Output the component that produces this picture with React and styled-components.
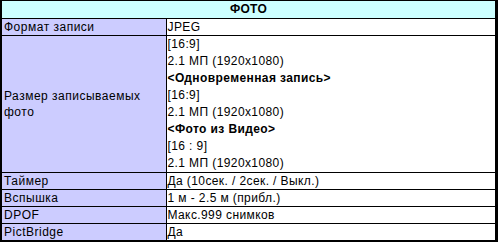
import styled, { createGlobalStyle } from "styled-components";

const GlobalStyle = createGlobalStyle`
  html, body {
    margin: 0;
    padding: 0;
    background: #ffffff;
  }
`;

const Frame = styled.div`
  width: 498px;
  height: 242px;
  box-sizing: border-box;
  border-top: 1px solid #000;
  border-left: 2px solid #000;
  border-right: 3px solid #000;
  border-bottom: 2px solid #000;
  font-family: "Liberation Sans", Arial, sans-serif;
  font-size: 12px;
  color: #000;
`;

const Table = styled.table`
  width: 100%;
  border-collapse: collapse;
  table-layout: fixed;
`;

const LabelCol = styled.col`
  width: 164px;
`;

const HeaderCell = styled.th`
  background: #ccffff;
  height: 17px;
  padding: 0;
  font-size: 12px;
  font-weight: bold;
  text-align: center;
  border-bottom: 1px solid #000;
  line-height: 17px;
  letter-spacing: 0.3px;
`;

const LabelCell = styled.td`
  background: #ccccff;
  padding: 0 0 0 2px;
  border-right: 1px solid #000;
  border-top: 1px solid #000;
  vertical-align: middle;
  line-height: 16px;
  height: 16px;
  font-weight: normal;
  letter-spacing: 0.5px;
  white-space: nowrap;
`;

const ValueCell = styled.td`
  background: #ffffff;
  padding: 0 0 0 1px;
  border-top: 1px solid #000;
  line-height: 16px;
  height: 16px;
  font-weight: normal;
  letter-spacing: 0.4px;
  white-space: nowrap;
`;

const Line = styled.div`
  line-height: 17px;
  font-weight: ${(p) => (p.$bold ? "bold" : "normal")};
`;

const rows = [
  ["Таймер", "Да (10сек. / 2сек. / Выкл.)"],
  ["Вспышка", "1 м - 2.5 м (прибл.)"],
  ["DPOF", "Макс.999 снимков"],
  ["PictBridge", "Да"],
];

const sizeLines = [
  { text: "[16:9]" },
  { text: "2.1 МП (1920x1080)" },
  { text: "<Одновременная запись>", bold: true },
  { text: "[16:9]" },
  { text: "2.1 МП (1920x1080)" },
  { text: "<Фото из Видео>", bold: true },
  { text: "[16 : 9]" },
  { text: "2.1 МП (1920x1080)" },
];

export default function App() {
  return (
    <>
      <GlobalStyle />
      <Frame>
        <Table>
          <colgroup>
            <LabelCol />
            <col />
          </colgroup>
          <thead>
            <tr>
              <HeaderCell colSpan={2}>ФОТО</HeaderCell>
            </tr>
          </thead>
          <tbody>
            <tr>
              <LabelCell>Формат записи</LabelCell>
              <ValueCell>JPEG</ValueCell>
            </tr>
            <tr>
              <LabelCell>
                Размер записываемых
                <br />
                фото
              </LabelCell>
              <ValueCell>
                {sizeLines.map((l, i) => (
                  <Line key={i} $bold={l.bold}>
                    {l.text}
                  </Line>
                ))}
              </ValueCell>
            </tr>
            {rows.map(([label, value]) => (
              <tr key={label}>
                <LabelCell>{label}</LabelCell>
                <ValueCell>{value}</ValueCell>
              </tr>
            ))}
          </tbody>
        </Table>
      </Frame>
    </>
  );
}
